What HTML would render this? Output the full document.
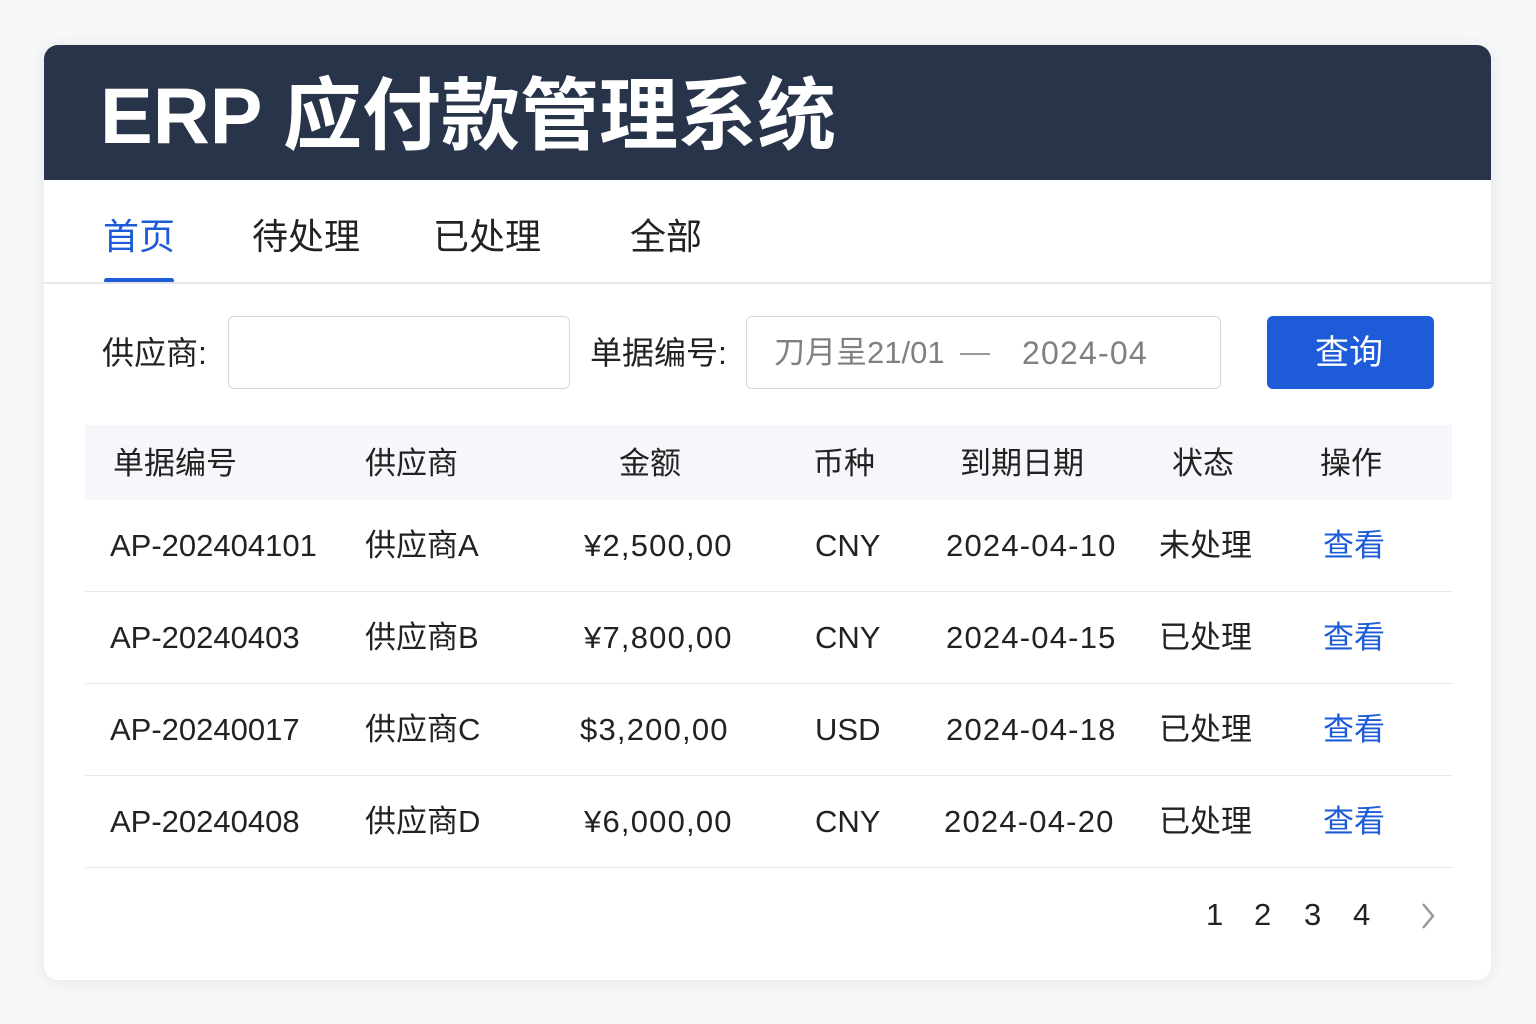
<!DOCTYPE html>
<html><head><meta charset="utf-8"><style>
body{margin:0;width:1536px;height:1024px;background:#f7f8f9;font-family:"Liberation Sans","Noto Sans CJK SC",sans-serif;position:relative;overflow:hidden;color:#222}
.card{position:absolute;left:44px;top:45px;width:1447px;height:935px;background:#fff;border-radius:14px;box-shadow:0 2px 18px rgba(0,0,0,0.08);overflow:hidden}
.hdr{position:absolute;left:0;top:0;width:100%;height:135px;background:#283449}
.t{position:absolute;white-space:nowrap}
.title{left:56px;top:23px;font-size:79px;font-weight:bold;color:#fff;line-height:96px}
.tab{top:170px;font-size:36px;line-height:44px;color:#222}
.row{position:absolute;left:41px;width:1367px;height:1px;background:#e6e8eb}
.c{position:absolute;font-size:31px;line-height:40px;white-space:nowrap;color:#222}
.n{letter-spacing:1.2px}
.h{font-size:31px;color:#222}
.blue{color:#1d5bd8}
</style></head><body>
<div class="card">
<div class="hdr"></div>
<div class="t title">ERP 应付款管理系统</div>
<div class="t tab blue" style="left:59px">首页</div>
<div class="t tab" style="left:208px">待处理</div>
<div class="t tab" style="left:389px">已处理</div>
<div class="t tab" style="left:586px">全部</div>
<div style="position:absolute;left:60px;top:233px;width:70px;height:5px;border-radius:3px;background:#1d5bd8"></div>
<div style="position:absolute;left:0;top:237px;width:100%;height:2px;background:#e4e6ea"></div>

<div class="c" style="left:58px;top:288px;font-size:32px">供应商:</div>
<div style="position:absolute;left:184px;top:271px;width:340px;height:71px;border:1.5px solid #d4d7dc;border-radius:6px"></div>
<div class="c" style="left:546px;top:288px;font-size:32px">单据编号:</div>
<div style="position:absolute;left:702px;top:271px;width:473px;height:71px;border:1.5px solid #d4d7dc;border-radius:6px"></div>
<div class="c" style="left:730px;top:288px;color:#808080;font-size:31px">刀月呈21/01</div>
<div style="position:absolute;left:916px;top:308px;width:30px;height:2px;background:#999"></div>
<div class="c n" style="left:978px;top:288px;color:#808080;font-size:32px">2024-04</div>
<div style="position:absolute;left:1223px;top:271px;width:167px;height:73px;background:#1d5bd8;border-radius:6px"></div>
<div class="c" style="left:1271px;top:288px;color:#fff;font-size:34px">查询</div>

<div style="position:absolute;left:41px;top:380px;width:1367px;height:75px;background:#f5f7fa"></div>
<div class="c h" style="left:69px;top:399px">单据编号</div>
<div class="c h" style="left:321px;top:399px">供应商</div>
<div class="c h" style="left:575px;top:399px">金额</div>
<div class="c h" style="left:769px;top:399px">币种</div>
<div class="c h" style="left:916px;top:399px">到期日期</div>
<div class="c h" style="left:1128px;top:399px">状态</div>
<div class="c h" style="left:1276px;top:399px">操作</div>

<div class="c" style="left:66px;top:481px">AP-202404101</div><div class="c" style="left:321px;top:481px">供应商A</div><div class="c n" style="left:540px;top:481px">¥2,500,00</div><div class="c" style="left:771px;top:481px">CNY</div><div class="c n" style="left:902px;top:481px">2024-04-10</div><div class="c" style="left:1115px;top:481px">未处理</div><div class="c blue" style="left:1279px;top:481px">查看</div>
<div class="row" style="top:546px"></div>
<div class="c" style="left:66px;top:573px">AP-20240403</div><div class="c" style="left:321px;top:573px">供应商B</div><div class="c n" style="left:540px;top:573px">¥7,800,00</div><div class="c" style="left:771px;top:573px">CNY</div><div class="c n" style="left:902px;top:573px">2024-04-15</div><div class="c" style="left:1115px;top:573px">已处理</div><div class="c blue" style="left:1279px;top:573px">查看</div>
<div class="row" style="top:638px"></div>
<div class="c" style="left:66px;top:665px">AP-20240017</div><div class="c" style="left:321px;top:665px">供应商C</div><div class="c n" style="left:536px;top:665px">$3,200,00</div><div class="c" style="left:771px;top:665px">USD</div><div class="c n" style="left:902px;top:665px">2024-04-18</div><div class="c" style="left:1115px;top:665px">已处理</div><div class="c blue" style="left:1279px;top:665px">查看</div>
<div class="row" style="top:730px"></div>
<div class="c" style="left:66px;top:757px">AP-20240408</div><div class="c" style="left:321px;top:757px">供应商D</div><div class="c n" style="left:540px;top:757px">¥6,000,00</div><div class="c" style="left:771px;top:757px">CNY</div><div class="c n" style="left:900px;top:757px">2024-04-20</div><div class="c" style="left:1115px;top:757px">已处理</div><div class="c blue" style="left:1279px;top:757px">查看</div>
<div class="row" style="top:822px"></div>

<div class="c" style="left:1162px;top:850px">1</div>
<div class="c" style="left:1210px;top:850px">2</div>
<div class="c" style="left:1260px;top:850px">3</div>
<div class="c" style="left:1309px;top:850px">4</div>
<svg style="position:absolute;left:1374px;top:856px" width="20" height="30" viewBox="0 0 20 30"><path d="M5 3 L15 15 L5 27" fill="none" stroke="#999" stroke-width="2.5"/></svg>
</div>
</body></html>
